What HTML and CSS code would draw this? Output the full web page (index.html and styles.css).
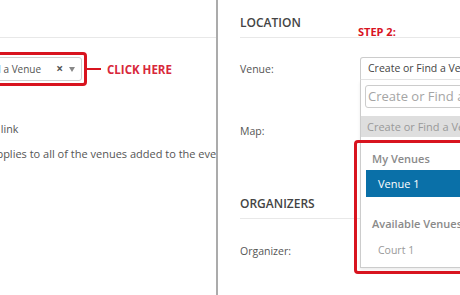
FILE: index.html
```html
<!DOCTYPE html>
<html lang="en">
<head>
    <meta charset="UTF-8">
    <meta name="viewport" content="width=device-width, initial-scale=1.0">
    <title>Event Location</title>
    <link rel="stylesheet" href="styles.css">
</head>
<body>
    <div class="page">
        <div class="left">
            <div class="left-inner">
                <div class="left-head"></div>
                <div class="pick-row">
                    <div class="red-box">
                        <div class="mini-select">
                            <span class="mini-text">Create or Find a Venue</span>
                            <span class="clear">&times;</span>
                            <span class="caret"></span>
                        </div>
                    </div>
                    <span class="connector"></span>
                    <span class="click-here">CLICK HERE</span>
                </div>
                <div class="link-line">Show Map link</div>
                <div class="note-line">This setting applies to all of the venues added to the event.</div>
            </div>
        </div>
        <div class="right">
            <div class="sec-head">
                LOCATION
                <span class="step">STEP 2:</span>
            </div>
            <div class="field-row venue-row">
                <label class="field-label">Venue:</label>
                <div class="select open">
                    <span class="select-text">Create or Find a Venue</span>
                    <div class="dropdown">
                        <div class="dd-search">
                            <div class="dd-input">Create or Find a Venue</div>
                        </div>
                        <div class="dd-opt create">Create or Find a Venue</div>
                        <div class="dd-group">My Venues</div>
                        <div class="dd-opt active">Venue 1</div>
                        <div class="dd-group avail">Available Venues</div>
                        <div class="dd-opt court">Court 1</div>
                    </div>
                    <div class="red-frame"></div>
                </div>
            </div>
            <div class="field-row map-row">
                <label class="field-label">Map:</label>
            </div>
            <div class="sec-head org-head">ORGANIZERS</div>
            <div class="field-row org-row">
                <label class="field-label">Organizer:</label>
                <div class="select"></div>
            </div>
        </div>
    </div>
</body>
</html>
```

FILE: styles.css
```css
body {
    margin: 0;
    background-color: #fff;
    font-family: 'Open Sans', sans-serif;
    color: #555;
    overflow: hidden;
}
.page {
    display: flex;
    width: 460px;
    height: 295px;
    overflow: hidden;
}
.left {
    width: 216px;
    flex-shrink: 0;
    border-right: 2px solid #ababab;
    overflow: hidden;
}
.left-inner {
    margin-left: -120px;
}
.left-head {
    height: 37px;
    border-bottom: 1px solid #e8e8e8;
    margin-left: 120px;
}
.pick-row {
    display: flex;
    align-items: center;
    margin-top: 14px;
}
.red-box {
    width: 197px;
    padding: 2px;
    border: 3px solid #d8141f;
    border-radius: 4px;
    flex-shrink: 0;
}
.mini-select {
    display: flex;
    justify-content: flex-end;
    align-items: center;
    height: 22px;
    border: 1px solid #cfcfcf;
    border-radius: 3px;
    padding-right: 6px;
    overflow: hidden;
    white-space: nowrap;
}
.mini-text {
    font-size: 10px;
    color: #555;
    margin-right: 15px;
}
.clear {
    font-size: 12px;
    font-weight: bold;
    color: #555;
    margin-right: 6px;
    line-height: 1;
}
.caret {
    width: 0;
    height: 0;
    border-left: 3.5px solid transparent;
    border-right: 3.5px solid transparent;
    border-top: 5px solid #888;
}
.connector {
    width: 14px;
    height: 2px;
    background-color: #d8141f;
}
.click-here {
    margin-left: 6px;
    font-size: 11.5px;
    font-weight: bold;
    color: #d8283a;
    white-space: nowrap;
}
.link-line {
    margin-top: 35px;
    margin-left: 66px;
    font-size: 10.7px;
    line-height: 16px;
    white-space: nowrap;
}
.note-line {
    margin-top: 9px;
    margin-left: 49px;
    font-size: 11px;
    line-height: 16px;
    white-space: nowrap;
}
.right {
    flex-grow: 1;
    padding-left: 22px;
    overflow: hidden;
}
.sec-head {
    position: relative;
    padding-top: 15px;
    padding-bottom: 6px;
    line-height: 16px;
    font-size: 12px;
    font-weight: 600;
    color: #444;
    border-bottom: 1px solid #e8e8e8;
    white-space: nowrap;
}
.step {
    position: absolute;
    left: 118px;
    top: 24px;
    font-size: 11px;
    font-weight: bold;
    color: #d8141f;
}
.field-row {
    display: flex;
    align-items: center;
    height: 23px;
}
.field-label {
    width: 120px;
    flex-shrink: 0;
    font-size: 10.5px;
    color: #555;
}
.venue-row {
    margin-top: 19px;
}
.select {
    position: relative;
    width: 260px;
    height: 21px;
    flex-shrink: 0;
    border: 1px solid #ccc;
    border-radius: 3px;
    background-color: #fff;
}
.select.open {
    border-bottom-color: #e4e4e4;
    border-radius: 3px 3px 0 0;
    z-index: 2;
}
.select-text {
    display: block;
    padding-left: 7px;
    line-height: 21px;
    font-size: 10.5px;
    color: #444;
    white-space: nowrap;
}
.dropdown {
    position: absolute;
    top: 22px;
    left: -1px;
    width: 260px;
    border: 1px solid #ccc;
    border-top: 0;
    background-color: #fff;
    padding-bottom: 3px;
    box-shadow: 0 2px 3px rgba(0, 0, 0, 0.08);
}
.dd-search {
    padding: 5px 4px 0 4px;
}
.dd-input {
    height: 21px;
    line-height: 21px;
    border: 1px solid #ccc;
    border-radius: 3px;
    padding-left: 2px;
    font-size: 13px;
    color: #a5a5a5;
    white-space: nowrap;
}
.dd-opt {
    height: 27px;
    line-height: 27px;
    margin-left: 5px;
    padding-left: 12px;
    font-size: 10.5px;
    color: #999;
    white-space: nowrap;
}
.dd-opt.create {
    height: 21px;
    line-height: 21px;
    margin-top: 8px;
    margin-left: 0;
    padding-left: 6px;
    background-color: #dedede;
    font-size: 11px;
}
.dd-opt.active {
    background-color: #0a70a8;
    color: #fff;
    font-size: 11px;
}
.dd-opt.court {
    margin-top: 2px;
}
.dd-group {
    margin-top: 11px;
    padding-left: 11px;
    line-height: 22px;
    font-size: 11px;
    font-weight: 600;
    color: #8a8a8a;
}
.dd-group.avail {
    margin-top: 16px;
}
.red-frame {
    position: absolute;
    left: -7px;
    top: 82px;
    width: 220px;
    height: 128px;
    border: 3px solid #d8141f;
    border-radius: 4px;
    pointer-events: none;
}
.map-row {
    margin-top: 39px;
}
.org-head {
    margin-top: 39px;
}
.org-row {
    margin-top: 20px;
}
```
